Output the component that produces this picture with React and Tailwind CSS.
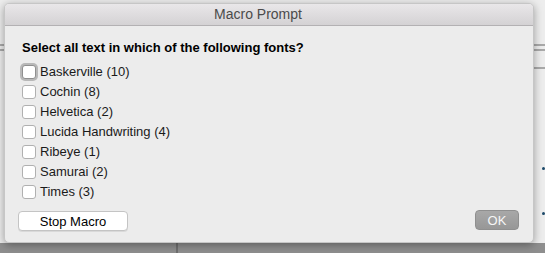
export default function App() {
  const fonts = [
    "Baskerville (10)",
    "Cochin (8)",
    "Helvetica (2)",
    "Lucida Handwriting (4)",
    "Ribeye (1)",
    "Samurai (2)",
    "Times (3)",
  ];
  return (
    <div
      className="relative w-[545px] h-[253px] overflow-hidden bg-[#ededed]"
      style={{ fontFamily: '"Liberation Sans", Arial, sans-serif' }}
    >
      {/* background decorations */}
      <div className="absolute left-0 right-0 top-[44px] h-[2px] bg-[#a9a9a9]" />
      <div className="absolute left-0 right-0 top-[49px] h-[2px] bg-[#a9a9a9]" />
      <div className="absolute left-[500px] right-0 top-[67px] h-[2px] bg-[#a9a9a9]" />
      <div className="absolute left-0 right-0 bottom-0 h-[10px] bg-[#8e8e8e]" />
      <div className="absolute left-[176px] bottom-0 h-[10px] w-[2px] bg-[#6f6f6f]" />
      <div className="absolute left-[542px] top-[167px] h-[3px] w-[3px] rounded-full bg-[#1d4a6a]" />
      <div className="absolute left-[542px] top-[212px] h-[3px] w-[3px] rounded-full bg-[#1d4a6a]" />

      {/* window */}
      <div className="absolute left-[4px] top-[3px] w-[530px] h-[240px] rounded-[5px] bg-[#ececec] shadow-[0_2px_8px_rgba(0,0,0,0.35)] flex flex-col overflow-hidden border border-[#c6c6c6]">
        <div className="h-[22px] shrink-0 flex items-center justify-center pr-[22px] bg-gradient-to-b from-[#e9e7e9] to-[#d4d2d4] border-b border-[#b3b1b3] text-[14px] text-[#4b4b4b]">
          Macro Prompt
        </div>
        <div className="flex-1 flex flex-col pl-[17px] pr-[14px]">
          <div className="mt-[14px] text-[13px] font-bold text-black leading-[16px]">
            Select all text in which of the following fonts?
          </div>
          <div className="mt-[6px] flex flex-col">
            {fonts.map((f, i) => (
              <label key={f} className="h-[20px] flex items-center gap-[4px] text-[13px] text-[#1a1a1a]">
                <span
                  className={
                    "w-[14px] h-[14px] rounded-[3px] bg-white border " +
                    (i === 0
                      ? "border-[#8f8f8f] shadow-[0_0_0_2px_#b8b8b8]"
                      : "border-[#b0b0b0]")
                  }
                />
                <span>{f}</span>
              </label>
            ))}
          </div>
          <div className="mt-[8px] flex items-start justify-between">
            <button className="mt-[1px] -ml-[4px] w-[110px] h-[20px] rounded-[4px] bg-white border border-[#c4c4c4] text-[13px] text-black leading-none shadow-[0_1px_0_rgba(0,0,0,0.08)]">
              Stop Macro
            </button>
            <button className="w-[44px] h-[20px] rounded-[4px] bg-gradient-to-b from-[#a8a8a8] to-[#979797] border border-[#8f8f8f] text-[13px] text-[#f6f6f6] leading-none">
              OK
            </button>
          </div>
        </div>
      </div>
    </div>
  );
}
